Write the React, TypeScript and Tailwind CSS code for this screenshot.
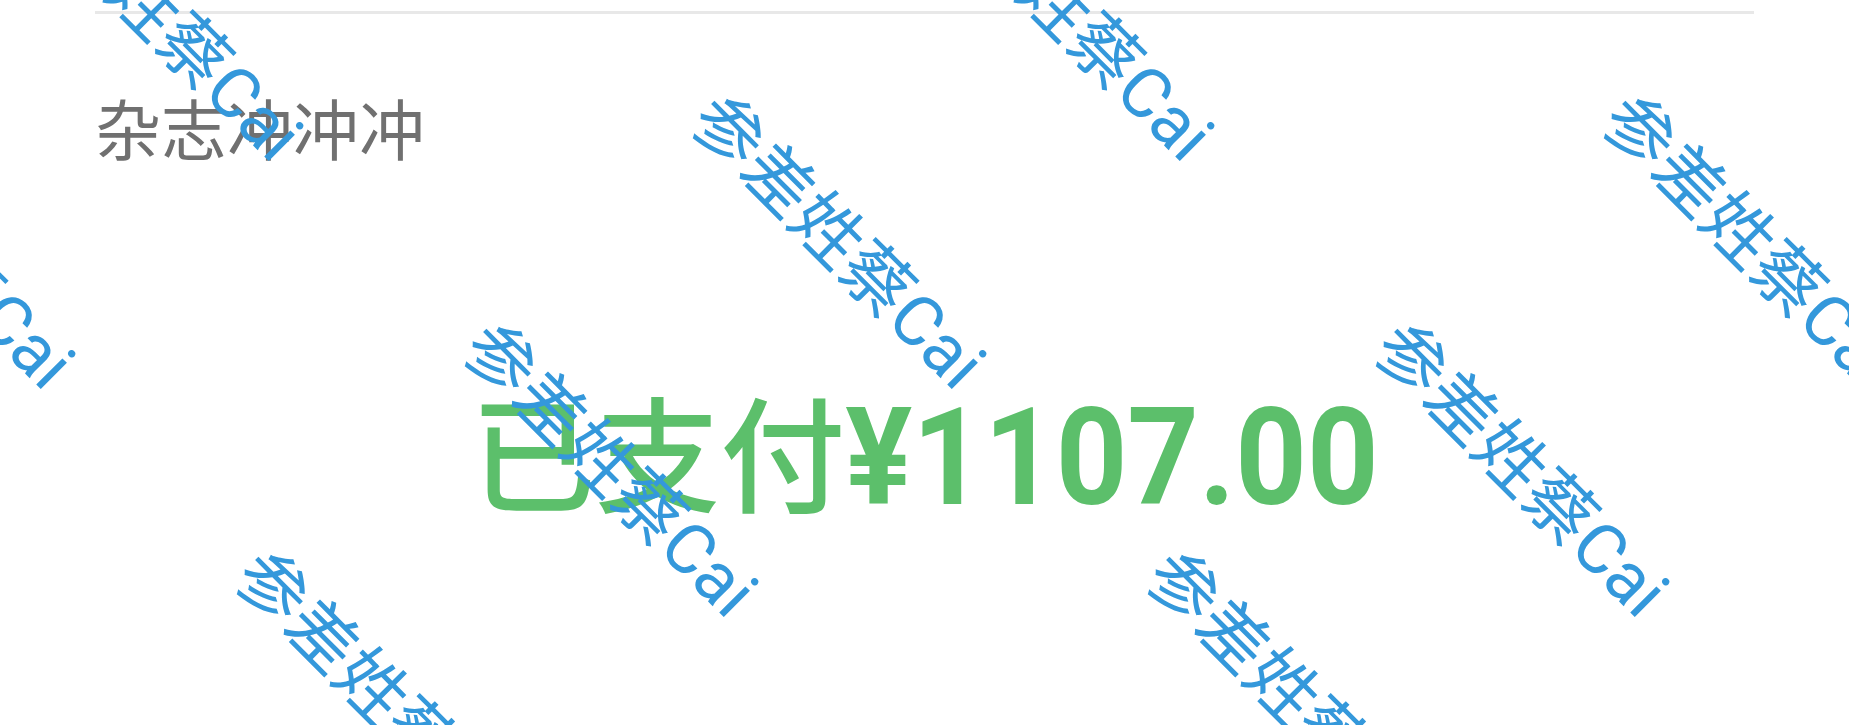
import React from 'react';

// watermark lattice: one copy every 911px across, rows 228px apart, each row shifted 228px left
const marks: { x: number; y: number }[] = [];
for (let k = -1; k <= 2; k++) {
  for (let m = -1; m <= 2; m++) {
    const x = 728 + 911 * m - 228 * k;
    const y = 82 + 228 * k;
    if (x > -440 && x < 1849) marks.push({ x, y });
  }
}

const Watermark: React.FC = () => {
  return (
    <div className="pointer-events-none absolute inset-0 overflow-hidden">
      {marks.map((p, i) => (
        <span
          key={i}
          className="absolute origin-top-left rotate-45 whitespace-nowrap text-[70px] leading-none text-[#3498db]"
          style={{ left: p.x, top: p.y }}
        >
          参差姓蔡Cai
        </span>
      ))}
    </div>
  );
};

export default function App() {
  return (
    <div
      className="relative h-[725px] w-full overflow-hidden bg-white"
      style={{ fontFamily: 'Roboto, "Noto Sans CJK SC", sans-serif' }}
    >
      <div className="px-[95px] pt-[11px]">
        <div className="h-[3px] bg-[#e8e8e8]" />
        <div className="mt-[86px] text-[66px] leading-none text-[#707070]">杂志冲冲冲</div>
        <div className="mt-[232px] text-center text-[125px] font-medium leading-none text-[#5cbf6b]">
          已支付
          <span className="inline-block origin-bottom translate-y-[3px] scale-y-[1.08] font-bold">¥1107.00</span>
        </div>
      </div>
      <Watermark />
    </div>
  );
}
